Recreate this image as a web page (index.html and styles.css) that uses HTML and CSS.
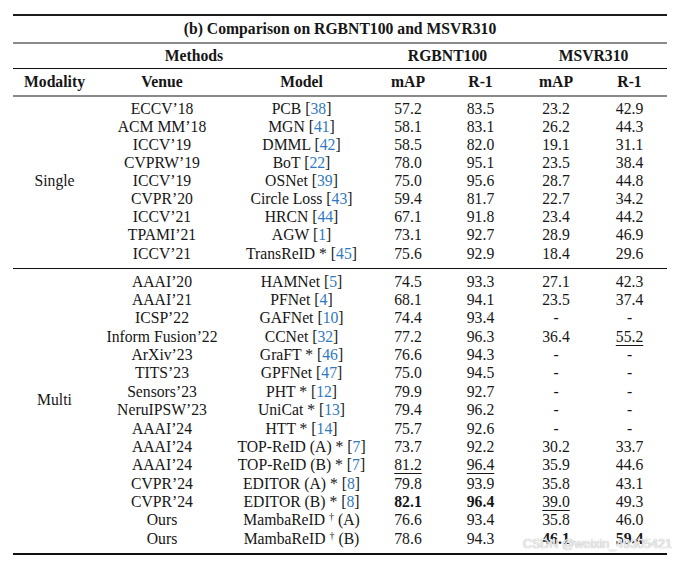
FILE: index.html
```html
<!DOCTYPE html>
<html lang="en">
<head>
<meta charset="utf-8">
<title>Comparison on RGBNT100 and MSVR310</title>
<link rel="stylesheet" href="styles.css">
</head>
<body>
<div class="page">
<table class="cmp">
<colgroup>
<col class="c-mod"><col class="c-venue"><col class="c-model"><col class="c-rmap"><col class="c-rr1"><col class="c-mmap"><col class="c-mr1">
</colgroup>
<thead>
<tr class="title-row"><th colspan="7">(b) Comparison on RGBNT100 and MSVR310</th></tr>
<tr class="group-row"><th colspan="3">Methods</th><th colspan="2">RGBNT100</th><th colspan="2">MSVR310</th></tr>
<tr class="col-row"><th>Modality</th><th>Venue</th><th>Model</th><th>mAP</th><th>R-1</th><th>mAP</th><th>R-1</th></tr>
</thead>
<tbody class="single">
<tr><td rowspan="9" class="mod">Single</td><td>ECCV’18</td><td>PCB [<span class="cite">38</span>]</td><td>57.2</td><td>83.5</td><td>23.2</td><td>42.9</td></tr>
<tr><td>ACM MM’18</td><td>MGN [<span class="cite">41</span>]</td><td>58.1</td><td>83.1</td><td>26.2</td><td>44.3</td></tr>
<tr><td>ICCV’19</td><td>DMML [<span class="cite">42</span>]</td><td>58.5</td><td>82.0</td><td>19.1</td><td>31.1</td></tr>
<tr><td>CVPRW’19</td><td>BoT [<span class="cite">22</span>]</td><td>78.0</td><td>95.1</td><td>23.5</td><td>38.4</td></tr>
<tr><td>ICCV’19</td><td>OSNet [<span class="cite">39</span>]</td><td>75.0</td><td>95.6</td><td>28.7</td><td>44.8</td></tr>
<tr><td>CVPR’20</td><td>Circle Loss [<span class="cite">43</span>]</td><td>59.4</td><td>81.7</td><td>22.7</td><td>34.2</td></tr>
<tr><td>ICCV’21</td><td>HRCN [<span class="cite">44</span>]</td><td>67.1</td><td>91.8</td><td>23.4</td><td>44.2</td></tr>
<tr><td>TPAMI’21</td><td>AGW [<span class="cite">1</span>]</td><td>73.1</td><td>92.7</td><td>28.9</td><td>46.9</td></tr>
<tr><td>ICCV’21</td><td>TransReID * [<span class="cite">45</span>]</td><td>75.6</td><td>92.9</td><td>18.4</td><td>29.6</td></tr>
</tbody>
<tbody class="multi">
<tr><td rowspan="15" class="mod">Multi</td><td>AAAI’20</td><td>HAMNet [<span class="cite">5</span>]</td><td>74.5</td><td>93.3</td><td>27.1</td><td>42.3</td></tr>
<tr><td>AAAI’21</td><td>PFNet [<span class="cite">4</span>]</td><td>68.1</td><td>94.1</td><td>23.5</td><td>37.4</td></tr>
<tr><td>ICSP’22</td><td>GAFNet [<span class="cite">10</span>]</td><td>74.4</td><td>93.4</td><td>-</td><td>-</td></tr>
<tr><td>Inform Fusion’22</td><td>CCNet [<span class="cite">32</span>]</td><td>77.2</td><td>96.3</td><td>36.4</td><td><span class="second">55.2</span></td></tr>
<tr><td>ArXiv’23</td><td>GraFT * [<span class="cite">46</span>]</td><td>76.6</td><td>94.3</td><td>-</td><td>-</td></tr>
<tr><td>TITS’23</td><td>GPFNet [<span class="cite">47</span>]</td><td>75.0</td><td>94.5</td><td>-</td><td>-</td></tr>
<tr><td>Sensors’23</td><td>PHT * [<span class="cite">12</span>]</td><td>79.9</td><td>92.7</td><td>-</td><td>-</td></tr>
<tr><td>NeruIPSW’23</td><td>UniCat * [<span class="cite">13</span>]</td><td>79.4</td><td>96.2</td><td>-</td><td>-</td></tr>
<tr><td>AAAI’24</td><td>HTT * [<span class="cite">14</span>]</td><td>75.7</td><td>92.6</td><td>-</td><td>-</td></tr>
<tr><td>AAAI’24</td><td>TOP-ReID (A) * [<span class="cite">7</span>]</td><td>73.7</td><td>92.2</td><td>30.2</td><td>33.7</td></tr>
<tr><td>AAAI’24</td><td>TOP-ReID (B) * [<span class="cite">7</span>]</td><td><span class="second">81.2</span></td><td><span class="second">96.4</span></td><td>35.9</td><td>44.6</td></tr>
<tr><td>CVPR’24</td><td>EDITOR (A) * [<span class="cite">8</span>]</td><td>79.8</td><td>93.9</td><td>35.8</td><td>43.1</td></tr>
<tr><td>CVPR’24</td><td>EDITOR (B) * [<span class="cite">8</span>]</td><td><b class="best">82.1</b></td><td><b class="best">96.4</b></td><td><span class="second">39.0</span></td><td>49.3</td></tr>
<tr><td>Ours</td><td>MambaReID <sup class="dag">†</sup> (A)</td><td>76.6</td><td>93.4</td><td>35.8</td><td>46.0</td></tr>
<tr><td>Ours</td><td>MambaReID <sup class="dag">†</sup> (B)</td><td>78.6</td><td>94.3</td><td><b class="best">46.1</b></td><td><b class="best">59.4</b></td></tr>
</tbody>
</table>
<div class="watermark">CSDN @weixin_49305421</div>
</div>
</body>
</html>
```

FILE: styles.css
```css
html, body {
  margin: 0;
  padding: 0;
  background: #ffffff;
}

.page {
  position: relative;
  width: 680px;
  height: 561px;
  padding-top: 14px;
  box-sizing: border-box;
  font-family: "Liberation Serif", "Times New Roman", serif;
  font-size: 15.7px;
  color: #161616;
}

.cmp {
  margin-left: 13px;
  width: 654px;
  table-layout: fixed;
  border-collapse: separate;
  border-spacing: 0;
  border-top: 2px solid #1c1c1c;
}

.c-mod { width: 83px; }
.c-venue { width: 132px; }
.c-model { width: 147px; }
.c-rmap { width: 66px; }
.c-rr1 { width: 79px; }
.c-mmap { width: 72px; }
.c-mr1 { width: 75px; }

.cmp th,
.cmp td {
  padding: 0;
  text-align: center;
  white-space: nowrap;
  vertical-align: middle;
}

.cmp th {
  font-weight: bold;
}

.title-row th {
  height: 25.5px;
  line-height: 25.5px;
  border-bottom: 2px solid #8a8a8a;
}

.group-row th {
  height: 24.5px;
  line-height: 24.5px;
  border-bottom: 1px solid #111111;
}

.col-row th {
  height: 25.5px;
  line-height: 25.5px;
  border-bottom: 2px solid #8a8a8a;
}

.single td {
  line-height: 18.125px;
}

.single tr:first-child td {
  padding-top: 3px;
}

.single tr:last-child td {
  padding-bottom: 5px;
}

.single td.mod,
.single tr:last-child td {
  border-bottom: 1px solid #111111;
}

.single td.mod {
  padding-bottom: 5px;
}

.multi td {
  line-height: 18.36px;
}

.multi tr:first-child td {
  padding-top: 4px;
}

.multi tr:last-child td {
  padding-bottom: 5px;
}

.multi td.mod,
.multi tr:last-child td {
  border-bottom: 2px solid #111111;
}

.multi td.mod {
  padding-bottom: 25px;
}

.cite {
  color: #2f79bf;
}

.second {
  text-decoration: underline;
  text-decoration-thickness: 1px;
  text-underline-offset: 3px;
}

.best {
  font-weight: bold;
}

.dag {
  font-size: 10px;
  line-height: 0;
  vertical-align: 0.5em;
}

.watermark {
  position: absolute;
  left: 523px;
  top: 536px;
  font-family: "Liberation Sans", Arial, sans-serif;
  font-size: 12.5px;
  line-height: 16px;
  color: rgba(255, 255, 255, 0.8);
  text-shadow: 0 0 1px #b4b4b4, 0 0 1px #b4b4b4;
  white-space: nowrap;
}
```
